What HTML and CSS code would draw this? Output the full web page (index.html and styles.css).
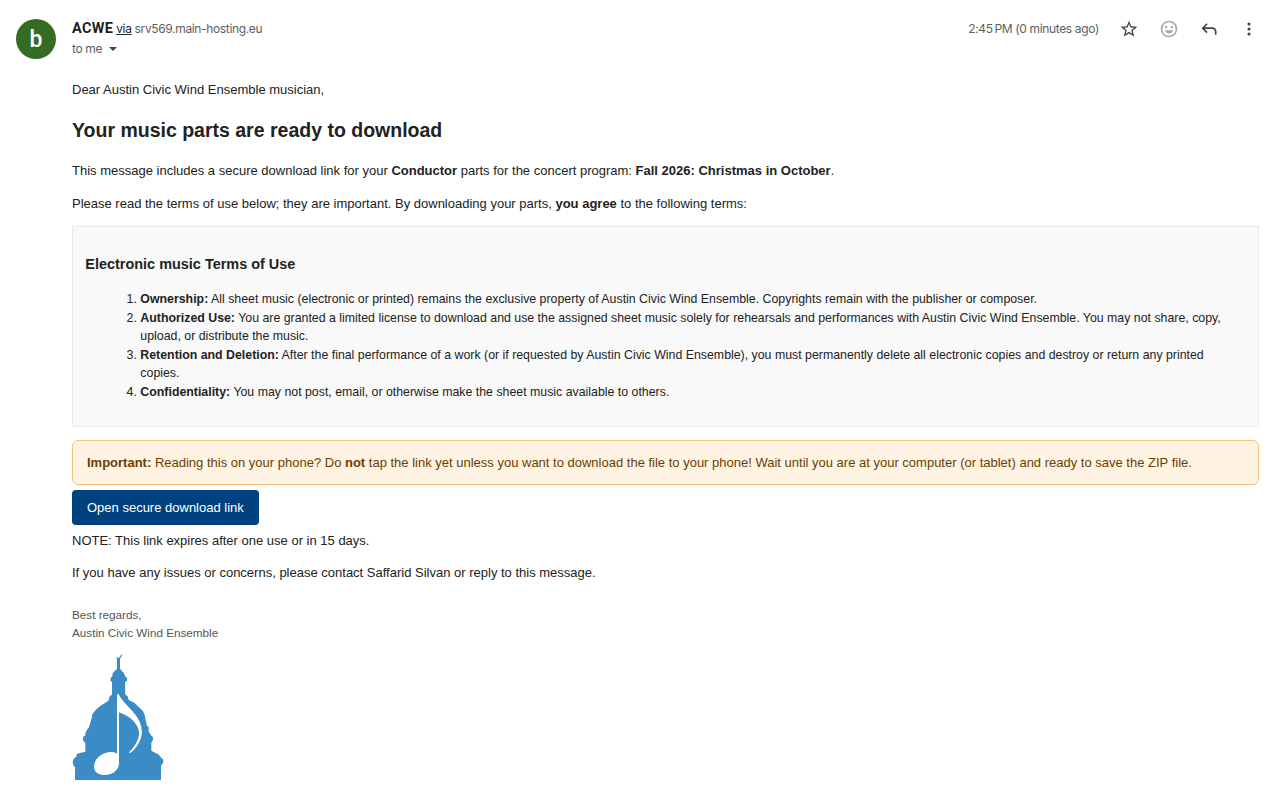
FILE: index.html
```
<!DOCTYPE html>
<html lang="en">
<head>
<meta charset="UTF-8">
<meta name="viewport" content="width=device-width, initial-scale=1.0">
<title>Your music parts are ready to download</title>
<link rel="stylesheet" href="styles.css">
</head>
<body>

<div class="message">
    <div class="avatar">b</div>

    <div class="content">
        <header class="header">
            <div class="sender">
                <div class="from"><strong>ACWE</strong> <a class="via">via</a> <span class="host">srv569.main-hosting.eu</span></div>
                <div class="to"><span class="to-text">to me</span> <span class="caret"></span></div>
            </div>
            <div class="actions">
                <span class="time">2:45&#8239;PM (0 minutes ago)</span>
                <svg class="icon" viewBox="0 0 24 24"><path d="M22 9.24l-7.19-.62L12 2 9.19 8.63 2 9.24l5.46 4.73L5.82 21 12 17.27 18.18 21l-1.63-7.03L22 9.24zM12 15.4l-3.76 2.27 1-4.28-3.32-2.88 4.38-.38L12 6.1l1.71 4.04 4.38.38-3.32 2.88 1 4.28L12 15.4z"/></svg>
                <svg class="icon light" viewBox="0 0 24 24"><path d="M12 2a10 10 0 1 0 0 20 10 10 0 0 0 0-20zm0 18a8 8 0 1 1 0-16 8 8 0 0 1 0 16zM7 13.5h10c-.7 2.4-2.6 4-5 4s-4.300-1.600-5-4z"/><circle cx="8.500" cy="9.500" r="1.500"/><circle cx="15.500" cy="9.500" r="1.500"/></svg>
                <svg class="icon" viewBox="0 0 24 24"><path d="M19 19v-4c0-.83-.29-1.540-.88-2.130C17.540 12.290 16.830 12 16 12H6.830l3.580 3.600L9 17l-6-6 6-6 1.410 1.400L6.830 10H16c1.380 0 2.560.49 3.540 1.460C20.510 12.440 21 13.620 21 15v4h-2z"/></svg>
                <svg class="icon" viewBox="0 0 24 24"><circle cx="12" cy="6" r="1.900"/><circle cx="12" cy="12" r="1.900"/><circle cx="12" cy="18" r="1.900"/></svg>
            </div>
        </header>

        <div class="body">
            <p>Dear Austin Civic Wind Ensemble musician,</p>
            <h2>Your music parts are ready to download</h2>
            <p>This message includes a secure download link for your <strong>Conductor</strong> parts for the concert program: <strong>Fall 2026: Christmas in October</strong>.</p>
            <p>Please read the terms of use below; they are important. By downloading your parts, <strong>you agree</strong> to the following terms:</p>

            <div class="terms">
                <h3>Electronic music Terms of Use</h3>
                <ol>
                    <li><strong>Ownership:</strong> All sheet music (electronic or printed) remains the exclusive property of Austin Civic Wind Ensemble. Copyrights remain with the publisher or composer.</li>
                    <li><strong>Authorized Use:</strong> You are granted a limited license to download and use the assigned sheet music solely for rehearsals and performances with Austin Civic Wind Ensemble. You may not share, copy, upload, or distribute the music.</li>
                    <li><strong>Retention and Deletion:</strong> After the final performance of a work (or if requested by Austin Civic Wind Ensemble), you must permanently delete all electronic copies and destroy or return any printed copies.</li>
                    <li><strong>Confidentiality:</strong> You may not post, email, or otherwise make the sheet music available to others.</li>
                </ol>
            </div>

            <div class="notice"><strong>Important:</strong> Reading this on your phone? Do <strong>not</strong> tap the link yet unless you want to download the file to your phone! Wait until you are at your computer (or tablet) and ready to save the ZIP file.</div>

            <a class="button" href="#">Open secure download link</a>

            <p class="note">NOTE: This link expires after one use or in 15 days.</p>
            <p>If you have any issues or concerns, please contact Saffarid Silvan or reply to this message.</p>

            <div class="signature">Best regards,<br>Austin Civic Wind Ensemble</div>

            <!-- Capitol dome with a music note -->
            <svg class="logo" viewBox="36 39 276 384">
                <path class="dome" d="M45 420V382L40 376L38 364L43 354L49 350L50 342L60 339L76 335V310L69 301V291L76 286L77 277L82 268L86 264L91 248L95 235L97 223L107 210L120 198L140 186L146 181L149 169L156 164V126L151 122L153 112L157 109L158 100L171 86V58L168 52L174 54L180 51L182 46L188 42L184 50L180 56V86L193 101L195 109L201 113V122L195 127L196 164L203 169L206 180L223 188L237 202L248 212L254 224L257 240L261 257L266 262V274L273 286L279 291V299L274 308V332L285 338L297 344L302 352L310 359V367L303 378V420Z"/>
                <path class="tune" d="M171 163l5-1c11 24 33 40 51 63 13 18 21 38 18 60-4 21-16 40-34 54l-4-2c17-17 31-37 30-60-2-28-31-50-60-60v152c0 20-18 36-42 36-20 0-33-9-33-25 0-25 27-45 52-44 7 0 12 2 17 5z"/>
            </svg>
        </div>
    </div>
</div>

</body>
</html>
```

FILE: styles.css
```
body {
    margin: 0;
    background-color: #ffffff;
    color: #222222;
    font-family: "Liberation Sans", Arial, sans-serif;
    font-size: 13px;
    line-height: 1.5;
}

.message {
    display: flex;
    gap: 16px;
    padding: 19px 21px 0 16px;
}

.avatar {
    flex: none;
    width: 40px;
    height: 40px;
    border-radius: 50%;
    background-color: #366b24;
    color: white;
    font-family: Roboto, sans-serif;
    font-size: 23px;
    font-weight: 500;
    line-height: 41px;
    text-align: center;
}

.content {
    flex: 1;
}

.header {
    display: flex;
    justify-content: space-between;
    height: 61px;
    font-family: Inter, Roboto, sans-serif;
    font-size: 12px;
    line-height: 20px;
    letter-spacing: -0.35px;
    color: #5e5e5e;
}

.from strong {
    font-family: Roboto, sans-serif;
    font-size: 14.5px;
    letter-spacing: 0.3px;
    color: #1f1f1f;
}

.via {
    color: #222222;
    text-decoration: underline;
}

.caret {
    display: inline-block;
    margin-left: 4px;
    border: 4px solid transparent;
    border-top-color: #444444;
    border-bottom: 0;
    vertical-align: 2px;
}

.actions {
    display: flex;
    align-items: center;
    gap: 20px;
    height: 20px;
}

.icon {
    width: 20px;
    height: 20px;
    fill: #444444;
}

.light {
    fill: #a9a9a9;
}

p {
    margin: 13px 0;
}

.body > p:first-child {
    margin-top: 0;
}

h2 {
    margin: 16.2px 0;
    font-size: 19.5px;
}

.terms {
    padding: 12.35px;
    border: 1px solid #eaeaea;
    background-color: #f9f9f9;
    font-size: 12.35px;
}

h3 {
    margin: 14.45px 0;
    font-size: 14.45px;
}

ol {
    margin: 12.35px 0;
    padding-left: 40px;
}

li {
    margin: 0 15px;
}

.notice {
    margin: 13px 0 5px;
    padding: 12px 14px;
    border: 1px solid #f5c27a;
    border-radius: 6px;
    background-color: #fff3e3;
    color: #6b3e00;
    line-height: 19px;
}

.button {
    display: block;
    width: fit-content;
    padding: 8px 15px;
    border-radius: 4px;
    background-color: #00427f;
    color: #ffffff;
    line-height: 19px;
    text-decoration: none;
}

.note {
    margin-top: 6px;
}

.signature {
    margin-top: 23px;
    font-size: 11.7px;
    line-height: 18px;
    color: #555555;
}

.logo {
    display: block;
    width: 92px;
    height: 128px;
    margin-top: 11.6px;
}

.dome {
    fill: #3b8bc6;
}

.tune {
    fill: #ffffff;
}
```
